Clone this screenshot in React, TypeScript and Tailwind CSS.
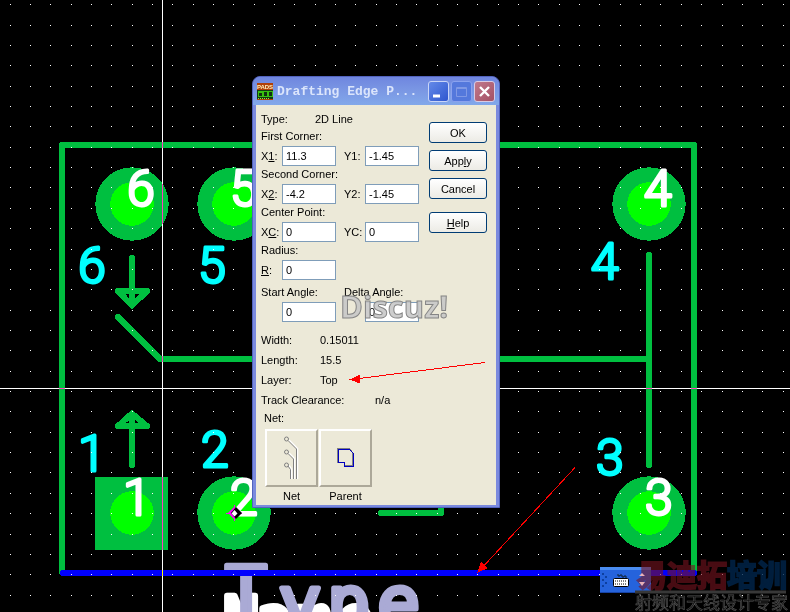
import React from "react";

const COLS = Array.from({ length: 39 }, (_, i) => Math.floor(10.1 + i * 20.34));
const ROWS = Array.from({ length: 30 }, (_, i) => Math.floor(4.7 + i * 20.36));

const PADS = [
	{ x: 132, y: 204 },
	{ x: 234, y: 204 },
	{ x: 649, y: 204 },
	{ x: 649, y: 513 },
	{ x: 234, y: 513 },
];

const PIN_NUMBERS = [
	{ n: "6", x: 127, y: 206 },
	{ n: "5", x: 230, y: 206 },
	{ n: "4", x: 644, y: 206 },
	{ n: "3", x: 645, y: 515 },
	{ n: "2", x: 230, y: 515 },
	{ n: "1", x: 123, y: 515 },
];

const PIN_LABELS = [
	{ n: "6", x: 78, y: 283 },
	{ n: "5", x: 198, y: 283 },
	{ n: "4", x: 591, y: 279 },
	{ n: "3", x: 596, y: 475 },
	{ n: "2", x: 201, y: 467 },
	{ n: "1", x: 78, y: 471 },
];

export default function App() {
	return (
		<main className="relative min-h-screen overflow-hidden bg-black font-['Liberation_Sans',Arial,sans-serif]">
			<Board />
			<Dialog />
			<Overlay />
		</main>
	);
}

function Board() {
	return (
		<svg
			className="absolute inset-0 h-full w-full"
			viewBox="0 0 790 612"
			preserveAspectRatio="xMinYMin slice"
		>
			{/* pads */}
			<g shapeRendering="crispEdges">
				{PADS.map((p) => (
					<circle key={`${p.x}-${p.y}`} cx={p.x} cy={p.y} r="36.7" fill="#00bf40" />
				))}
				<rect x="95" y="477" width="73" height="73" fill="#00bf40" />
				{PADS.concat({ x: 132, y: 513 }).map((p) => (
					<circle key={`${p.x}-${p.y}`} cx={p.x} cy={p.y} r="21.8" fill="#00ff00" />
				))}
			</g>

			{/* silkscreen */}
			<g
				fill="none"
				stroke="#00bf40"
				strokeWidth="6"
				strokeLinecap="round"
				strokeLinejoin="round"
				shapeRendering="crispEdges"
			>
				<path d="M62 572V145H694V572" />
				<path d="M132 258V304M118 291H147L132 305.500Z" />
				<path d="M118 317L160 359H649M649 255V465" />
				<path d="M132 465V415M118 426H147L132 413.500Z" />
				<path d="M381 513H441V505" />
			</g>

			<g
				className="font-['Roboto',sans-serif] font-light"
				fontSize="50"
				strokeWidth="3"
				strokeLinejoin="round"
			>
				{PIN_NUMBERS.map((p) => (
					<text key={p.n} x={p.x} y={p.y} fill="#fff" stroke="#fff">
						{p.n}
					</text>
				))}
				{PIN_LABELS.map((p) => (
					<text key={p.n} x={p.x} y={p.y} fill="#0ff" stroke="#0ff">
						{p.n}
					</text>
				))}
			</g>

			<g className="font-['DejaVu_Sans_Mono',monospace]" strokeLinejoin="round">
				<text x="223 256 295 337" y="640" fontSize="60" fill="#fff" stroke="#fff" strokeWidth="6">
					Name
				</text>
				<g fill="#aaaad5" stroke="#aaaad5" strokeWidth="5">
					<text x="225" y="616" fontSize="70">
						T
						<tspan x="278 327 377" y="627" fontSize="72">ype</tspan>
					</text>
				</g>
			</g>

			<path
				d="M63 573H694"
				stroke="#00f"
				strokeWidth="6"
				strokeLinecap="round"
				shapeRendering="crispEdges"
			/>

			{/* grid */}
			<g fill="#fff" shapeRendering="crispEdges">
				{ROWS.map((y) =>
					COLS.map((x) => <rect key={`${x}-${y}`} x={x} y={y} width="1" height="1" />)
				)}
			</g>

			{/* origin marker */}
			<g>
				<path d="M234.500 505V521M226 513.500H242" stroke="#f0f" />
				<path d="M234 507L240 513L234 519L228 513Z" fill="#f0f" />
				<path d="M236 507L242 513L236 519L231 513Z" fill="#000" />
				<path d="M234.500 510L237.500 513.500L234.500 516.500L231.500 513.500Z" fill="#fff" />
			</g>

			{/* crosshair */}
			<g className="mix-blend-difference" fill="#fff">
				<rect x="162" width="1" height="612" />
				<rect y="388" width="790" height="1" />
			</g>
		</svg>
	);
}

function Dialog() {
	return (
		<section className="absolute left-[252px] top-[76px] w-[248px] rounded-t-lg border border-[#5263bd] bg-[#7b8ade] px-[3px] pb-[2px] text-[11px] leading-4 text-black">
			<header className="-mx-[3px] flex h-7 items-center rounded-t-lg bg-linear-to-b from-[#6f86df] via-[#7b98e4] to-[#82a8ea] pl-1 pr-1 pt-px">
				<PadsIcon />
				<h1 className="ml-1 flex-1 whitespace-nowrap font-['Liberation_Mono',monospace] text-[13px] font-bold text-[#dbe5fb]">
					Drafting Edge P...
				</h1>
				<div className="flex gap-[2px]">
					<TitleButton label="Minimize" className="border-[#c9d5f7] bg-linear-to-br from-[#6489e8] to-[#2f56cf]">
						<path d="M4 14H11" strokeWidth="3" />
					</TitleButton>
					<TitleButton label="Maximize" className="border-[#8aa2ee] bg-[#5478dc]">
						<path d="M4.500 5.500H14.500V14.500H4.500ZM4 6.500H15" stroke="#8099e5" strokeWidth="1" />
					</TitleButton>
					<TitleButton label="Close" className="border-[#d9cbe3] bg-linear-to-br from-[#c0798c] to-[#a45064]">
						<path d="M5 5L14 14M14 5L5 14" strokeWidth="2.400" />
					</TitleButton>
				</div>
			</header>

			<div className="flex justify-between bg-[#ece9d8] pb-px pl-[5px] pr-[9px] pt-1">
				<div>
					<div className="flex h-[19px] items-center">
						<span className="w-[54px]">Type:</span>
						<span>2D Line</span>
					</div>
					<Group title="First Corner:">
						<Field id="x1" label={<>X<u>1</u>:</>} value="11.3" />
						<Field id="y1" label="Y1:" value="-1.45" />
					</Group>
					<Group title="Second Corner:">
						<Field id="x2" label={<>X<u>2</u>:</>} value="-4.2" />
						<Field id="y2" label="Y2:" value="-1.45" />
					</Group>
					<Group title="Center Point:">
						<Field id="xc" label={<>X<u>C</u>:</>} value="0" />
						<Field id="yc" label="YC:" value="0" />
					</Group>
					<Group title="Radius:">
						<Field id="radius" label={<><u>R</u>:</>} value="0" />
					</Group>
					<div className="mt-1 flex gap-2">
						<AngleField id="start" label="Start Angle:" value="0" />
						<AngleField id="delta" label="Delta Angle:" value="0" />
					</div>

					<dl className="mt-2 grid grid-cols-[59px_auto] leading-5">
						<dt>Width:</dt>
						<dd>0.15011</dd>
						<dt>Length:</dt>
						<dd>15.5</dd>
						<dt>Layer:</dt>
						<dd>Top</dd>
					</dl>
					<div className="flex leading-5">
						<span className="w-[114px]">Track Clearance:</span>
						<span>n/a</span>
					</div>
					<div className="ml-[3px]">Net:</div>
					<div className="ml-1 mt-[3px] flex gap-px">
						<ToolButton label="Net">
							<NetIcon />
						</ToolButton>
						<ToolButton label="Parent">
							<ParentIcon />
						</ToolButton>
					</div>
				</div>

				<div className="mt-[13px] flex flex-col gap-[7px]">
					<PushButton>OK</PushButton>
					<PushButton>App<u>l</u>y</PushButton>
					<PushButton>Cancel</PushButton>
					<div className="mt-[6px]">
						<PushButton><u>H</u>elp</PushButton>
					</div>
				</div>
			</div>
		</section>
	);
}

function Group({ title, children }: any) {
	return (
		<div>
			<div>{title}</div>
			<div className="mt-[2px] flex gap-2">{children}</div>
		</div>
	);
}

function TextBox({ id, value }: any) {
	return (
		<input
			id={id}
			defaultValue={value}
			className="h-5 w-[54px] border border-[#7f9db9] bg-white px-[3px] pb-px text-[11px] outline-none"
		/>
	);
}

function Field({ id, label, value }: any) {
	return (
		<div className="flex items-center">
			<label htmlFor={id} className="w-[21px] whitespace-nowrap">
				{label}
			</label>
			<TextBox id={id} value={value} />
		</div>
	);
}

function AngleField({ id, label, value }: any) {
	return (
		<div className="flex w-[75px] flex-col items-end gap-[2px]">
			<label htmlFor={id} className="w-full whitespace-nowrap">
				{label}
			</label>
			<TextBox id={id} value={value} />
		</div>
	);
}

function PushButton({ children }: any) {
	return (
		<button className="flex h-[21px] w-[58px] items-center justify-center rounded-[3px] border border-[#003c74] bg-linear-to-b from-white to-[#ecebe5]">
			<span>{children}</span>
		</button>
	);
}

function ToolButton({ label, children }: any) {
	return (
		<div className="flex flex-col items-center">
			<button
				aria-label={label}
				className="flex h-[58px] w-[53px] items-center justify-center border-2 border-b-[#aca899] border-l-white border-r-[#aca899] border-t-white"
			>
				{children}
			</button>
			<span className="mt-px">{label}</span>
		</div>
	);
}

function TitleButton({ label, className, children }: any) {
	return (
		<button aria-label={label} className={`h-[21px] w-[21px] rounded-[3px] border ${className}`}>
			<svg width="19" height="19" viewBox="0 0 19 19" fill="none" stroke="#fff">
				{children}
			</svg>
		</button>
	);
}

function PadsIcon() {
	return (
		<svg width="16" height="17" viewBox="0 0 16 17" shapeRendering="crispEdges">
			<rect width="16" height="17" fill="#b04008" />
			<text x="8" y="6" fontSize="6" textAnchor="middle" className="font-bold" fill="#fff3c0">
				PADS
			</text>
			<rect y="7" width="16" height="9" fill="#123c10" />
			<rect x="1" y="8" width="15" height="6" fill="#38c010" />
			<path d="M2 10H5V13H2ZM7 9H10V13H7ZM12 9H15V13H12Z" fill="#103010" />
			<path d="M1 15.500H12" stroke="#90e840" strokeDasharray="1 1" />
		</svg>
	);
}

function NetIcon() {
	return (
		<svg width="16" height="44" viewBox="0 0 16 44" fill="none">
			<g stroke="#fff" strokeWidth="1.500">
				<path d="M5 4L13.500 12.500V43M5 17L10.500 22.500V43M5 29.500L7.500 33V43" />
			</g>
			<g stroke="#808080">
				<path d="M4 4.500L12.500 13V43M4 17.500L9.500 23V43M4 30L6.500 33.500V43" />
				<circle cx="2.500" cy="3" r="2" />
				<circle cx="2.500" cy="16" r="2" />
				<circle cx="2.500" cy="29" r="2" />
			</g>
		</svg>
	);
}

function ParentIcon() {
	return (
		<svg width="18" height="20" viewBox="0 0 18 20" fill="none" shapeRendering="crispEdges">
			<path d="M0.500 14.500V0.500H12.500L15.500 4.500V17.500H7.500V14.500Z" stroke="#808080" />
			<path d="M1.500 14.500V1.500H12.500L16.500 5.500V18.500H7.500V14.500Z" stroke="#0000c0" strokeWidth="1.400" />
		</svg>
	);
}

function Overlay() {
	return (
		<svg
			className="pointer-events-none absolute inset-0 h-full w-full"
			viewBox="0 0 790 612"
			preserveAspectRatio="xMinYMin slice"
		>
			<g stroke="#f00" fill="#f00" shapeRendering="crispEdges">
				<path d="M485 362.500L355 379" />
				<path d="M349.500 379.500L360 374.500V383.500Z" stroke="none" />
				<path d="M575 467.500L480 570" />
				<path d="M477 573L481 562L488 568Z" stroke="none" />
			</g>

			<text
				x="340"
				y="318"
				className="font-['Open_Sans',sans-serif] font-bold"
				fontSize="31"
				fill="#c8c8c8"
				fillOpacity="0.9"
				stroke="#858585"
				strokeWidth="1"
			>
				Discuz!
			</text>

			{/* input method bar */}
			<rect x="600" y="567" width="51" height="26" fill="#2563dc" />
			<path d="M600 568.500H651" stroke="#4a8cf0" strokeWidth="3" />
			<path d="M600 592.500H651" stroke="#1743a6" />
			<path
				d="M602 574H604M605 577H607M602 580H604M605 583H607M602 586H604"
				stroke="#0d3f9f"
				strokeWidth="2"
			/>
			<path d="M618 574V576H620V575H622V577H624V576H626V578" fill="none" stroke="#123" />
			<rect x="613.500" y="578.500" width="15" height="8" rx="1" fill="#fff" stroke="#000" />
			<path d="M615 581H627M615 584H627" stroke="#000" strokeDasharray="1 1" />

			<g className="font-['Noto_Sans_CJK_SC',sans-serif]">
				<g fontSize="30" className="font-bold" strokeWidth="2">
					<text x="637" y="586" fill="#781420" stroke="#781420" opacity="0.6">易迪拓</text>
					<text x="727" y="586" fill="#00264d" stroke="#00264d" opacity="0.8">培训</text>
				</g>
				<path d="M635 592H786" stroke="#383838" strokeWidth="3" />
				<text x="635" y="609" fontSize="17" fill="#111" stroke="#555" strokeWidth="0.6">
					射频和天线设计专家
				</text>
			</g>
			<path d="M639 576H645L642 573ZM639 582H645L642 586Z" fill="#e8b0b8" />
		</svg>
	);
}
